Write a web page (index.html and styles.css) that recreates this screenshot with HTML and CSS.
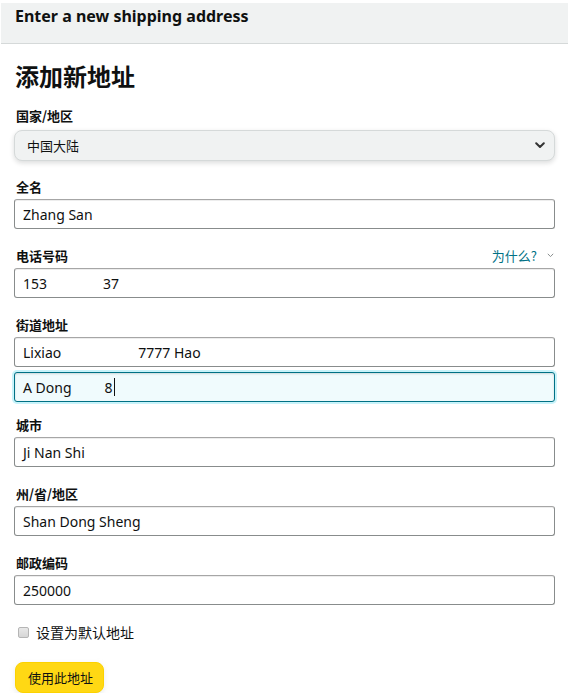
FILE: index.html
```html
<!DOCTYPE html>
<html lang="zh">
<head>
<meta charset="utf-8">
<title>Enter a new shipping address</title>
<link rel="stylesheet" href="styles.css">
</head>
<body>
<div class="page">
  <header class="topbar">Enter a new shipping address</header>
  <main class="form">
    <h1 class="title">添加新地址</h1>

    <div class="group">
      <div class="label">国家/地区</div>
      <div class="select">
        <span>中国大陆</span>
        <svg class="select-chev" width="10" height="7" viewBox="0 0 10 7"><path d="M1.2 1.2 L5 5 L8.8 1.2" fill="none" stroke="#333" stroke-width="2" stroke-linecap="round" stroke-linejoin="round"/></svg>
      </div>
    </div>

    <div class="group">
      <div class="label">全名</div>
      <div class="input">Zhang San</div>
    </div>

    <div class="group">
      <div class="label-row">
        <div class="label">电话号码</div>
        <div class="why">为什么? <svg class="why-chev" width="7" height="5" viewBox="0 0 7 5"><path d="M0.8 0.8 L3.5 3.6 L6.2 0.8" fill="none" stroke="#8a8f8f" stroke-width="1"/></svg></div>
      </div>
      <div class="input">153<span class="mask m-phone"></span>37</div>
    </div>

    <div class="group street">
      <div class="label">街道地址</div>
      <div class="input">Lixiao<span class="mask m-street"></span>7777 Hao</div>
      <div class="input focus">A Dong<span class="mask m-dong"></span>8<span class="caret"></span></div>
    </div>

    <div class="group">
      <div class="label">城市</div>
      <div class="input">Ji Nan Shi</div>
    </div>

    <div class="group">
      <div class="label">州/省/地区</div>
      <div class="input">Shan Dong Sheng</div>
    </div>

    <div class="group">
      <div class="label">邮政编码</div>
      <div class="input">250000</div>
    </div>

    <label class="check-row"><span class="checkbox"></span>设置为默认地址</label>

    <button class="btn">使用此地址</button>
  </main>
</div>
</body>
</html>
```

FILE: styles.css
```css
* { box-sizing: border-box; }
html, body { margin: 0; padding: 0; background: #fff; }
body {
  font-family: "Noto Sans", "Noto Sans CJK SC", sans-serif;
  color: #0f1111;
}
.page { padding: 3px 3px 0 1px; }
.topbar {
  background: #f0f2f2;
  border-bottom: 1px solid #d5d9d9;
  height: 41px;
  padding: 2px 0 0 14px;
  font-size: 16px;
  font-weight: 700;
  line-height: 22px;
}
.form { padding: 0 13px 0 13px; }
.title {
  margin: 16px 0 14px 1px;
  font-size: 24px;
  font-weight: 700;
  line-height: 32px;
  font-family: "Noto Sans CJK SC", sans-serif;
}
.group { margin-bottom: 17px; display: flex; flex-direction: column; }
.group.street { margin-bottom: 13px; }
.label {
  font-size: 13px;
  font-weight: 700;
  line-height: 19px;
  margin: 0 0 3px 2px;
  font-family: "Noto Sans CJK SC", sans-serif;
}
.label-row { display: flex; justify-content: space-between; align-items: flex-start; }
.why {
  font-size: 13px;
  line-height: 19px;
  color: #007185;
  display: flex;
  align-items: center;
  gap: 10px;
  font-family: "Noto Sans CJK SC", sans-serif;
}
.why-chev { margin-right: 1px; }
.select {
  height: 31px;
  margin-top: 2px;
  margin-bottom: -1px;
  background: #f0f2f2;
  border: 1px solid #d5d9d9;
  border-radius: 8px;
  box-shadow: 0 2px 5px rgba(15, 17, 17, 0.15);
  display: flex;
  align-items: center;
  justify-content: space-between;
  padding: 0 9px 0 12px;
  font-size: 13px;
  font-family: "Noto Sans CJK SC", sans-serif;
}
.input {
  height: 30px;
  border: 1px solid #888c8c;
  border-top-color: #a6a6a6;
  border-radius: 3px;
  box-shadow: 0 1px 0 rgba(0,0,0,.07) inset;
  padding: 0 8px;
  font-size: 14px;
  display: flex;
  align-items: center;
  white-space: pre;
}
.input + .input { margin-top: 5px; }
.input.focus {
  border-color: #007185;
  background: #f0fbfd;
  box-shadow: 0 0 0 2px #c8f3fa, 0 1px 2px rgba(15,17,17,.15) inset;
}
.mask { display: inline-block; }
.m-phone { width: 56px; }
.m-street { width: 77px; }
.m-dong { width: 33px; }
.caret { display: inline-block; width: 1px; height: 18px; background: #0f1111; margin-left: 1px; }
.check-row {
  display: flex;
  align-items: center;
  font-size: 14px;
  line-height: 20px;
  margin: 3px 0 0 4px;
  font-family: "Noto Sans CJK SC", sans-serif;
}
.checkbox {
  width: 11px;
  height: 11px;
  border: 1px solid #b5b5b5;
  background: linear-gradient(#e8e8e8, #d6d6d6);
  border-radius: 2px;
  margin-right: 7px;
}
.btn {
  margin: 20px 0 0 1px;
  height: 31px;
  padding: 0 10px 0 12px;
  background: #ffd814;
  border: 1px solid #fcd200;
  border-radius: 8px;
  box-shadow: 0 2px 5px rgba(213, 217, 217, 0.5);
  font-family: "Noto Sans CJK SC", sans-serif;
  font-size: 13px;
  color: #0f1111;
}
```
